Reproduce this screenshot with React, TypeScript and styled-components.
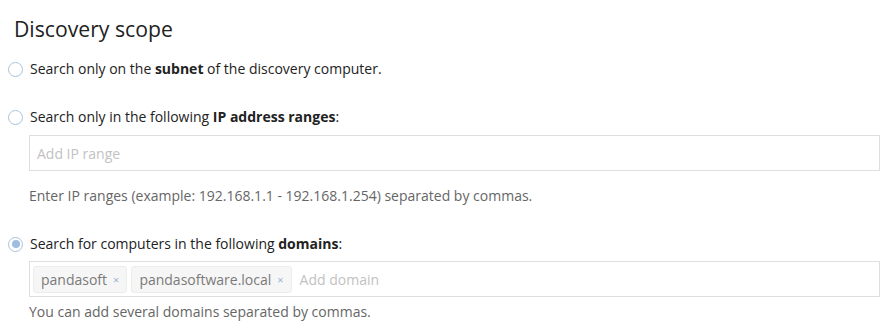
import styled, { createGlobalStyle } from 'styled-components';

const GlobalStyle = createGlobalStyle`
  html, body {
    margin: 0;
    padding: 0;
    background: #fff;
  }
  body {
    font-family: 'Open Sans', 'Liberation Sans', sans-serif;
    color: #222;
  }
`;

const Section = styled.div`
  width: 893px;
  padding: 14px 13px 0 8px;
  box-sizing: border-box;
`;

const Title = styled.h2`
  margin: 0 0 15px 6px;
  font-size: 21.2px;
  font-weight: 400;
  line-height: 30px;
  color: #222;
`;

const Option = styled.label`
  display: flex;
  align-items: center;
  gap: 7px;
  font-size: 14px;
  line-height: 20px;
  color: #222;
  cursor: pointer;
`;

const Radio = styled.span<{ checked?: boolean }>`
  width: 15px;
  height: 15px;
  border-radius: 50%;
  border: 1px solid #aac3dd;
  box-sizing: border-box;
  display: flex;
  align-items: center;
  justify-content: center;
  flex-shrink: 0;
  &::after {
    content: '';
    width: 8px;
    height: 8px;
    border-radius: 50%;
    background: ${(p) => (p.checked ? '#9fbde0' : 'transparent')};
  }
`;

const Group = styled.div<{ gap?: number }>`
  margin-bottom: ${(p) => p.gap ?? 0}px;
`;

const Body = styled.div`
  padding-left: 21px;
`;

const Field = styled.div<{ top: number }>`
  margin-top: ${(p) => p.top}px;
  height: 36px;
  border: 1px solid #dedede;
  box-sizing: border-box;
  display: flex;
  align-items: center;
  gap: 4px;
  padding: 0 3px;
`;

const Placeholder = styled.span`
  font-size: 14px;
  color: #c2c2c2;
  padding-left: 4px;
`;

const Tag = styled.span`
  height: 27px;
  display: flex;
  align-items: center;
  gap: 6px;
  padding: 0 7px;
  background: #f6f6f6;
  border: 1px solid #ececec;
  border-radius: 3px;
  box-sizing: border-box;
  font-size: 14px;
  color: #7a7a7a;
`;

const Remove = styled.span`
  font-size: 11px;
  color: #9ab4cf;
`;

const Help = styled.p<{ top: number }>`
  margin: ${(p) => p.top}px 0 0;
  font-size: 14px;
  line-height: 20px;
  color: #666;
`;

export default function App() {
  return (
    <>
      <GlobalStyle />
      <Section>
        <Title>Discovery scope</Title>
        <Group gap={28}>
          <Option>
            <Radio />
            <span>
              Search only on the <b>subnet</b> of the discovery computer.
            </span>
          </Option>
        </Group>
        <Group gap={28}>
          <Option>
            <Radio />
            <span>
              Search only in the following <b>IP address ranges</b>:
            </span>
          </Option>
          <Body>
            <Field top={8}>
              <Placeholder>Add IP range</Placeholder>
            </Field>
            <Help top={15}>
              Enter IP ranges (example: 192.168.1.1 - 192.168.1.254) separated by commas.
            </Help>
          </Body>
        </Group>
        <Group>
          <Option>
            <Radio checked />
            <span>
              Search for computers in the following <b>domains</b>:
            </span>
          </Option>
          <Body>
            <Field top={7}>
              <Tag>
                pandasoft <Remove>×</Remove>
              </Tag>
              <Tag>
                pandasoftware.local <Remove>×</Remove>
              </Tag>
              <Placeholder>Add domain</Placeholder>
            </Field>
            <Help top={5}>You can add several domains separated by commas.</Help>
          </Body>
        </Group>
      </Section>
    </>
  );
}
